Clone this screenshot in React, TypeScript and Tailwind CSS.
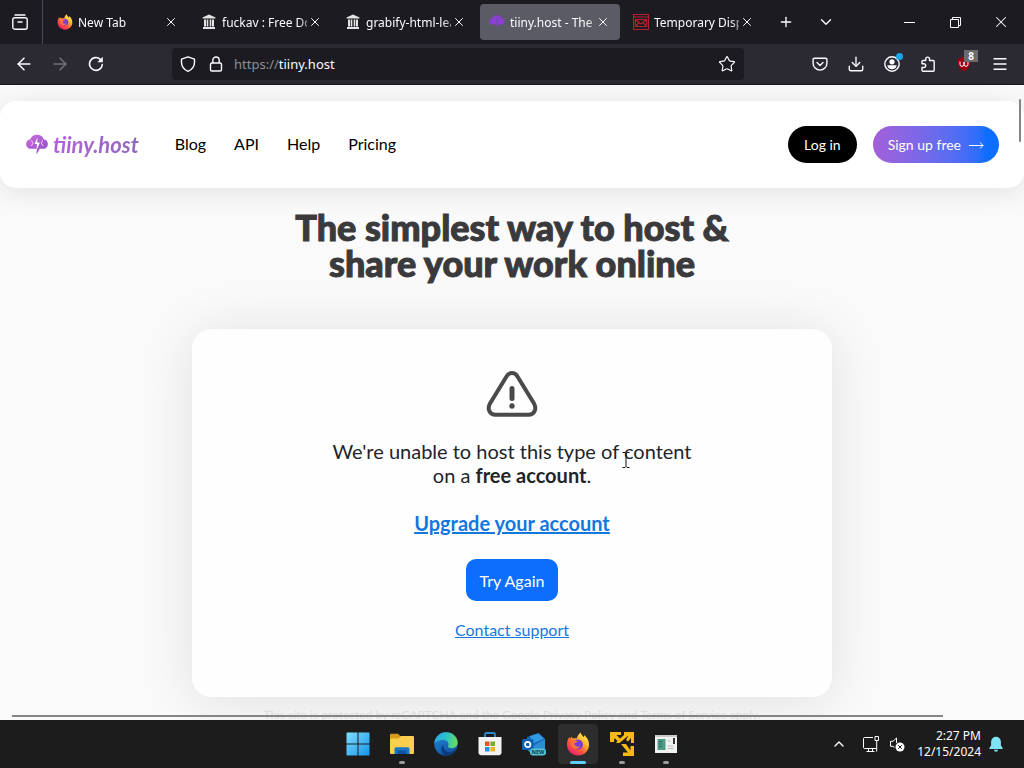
import type { ReactNode } from 'react'
import { ArrowLeft, ArrowRight, ChevronDown, ChevronUp, Download, Menu, Plus, Star, X } from 'lucide-react'

type Tab = { title: string; icon: ReactNode; active?: boolean }

function FirefoxIcon({ className }: { className: string }) {
  return (
    <svg viewBox="0 0 24 24" className={className} aria-hidden="true">
      <defs>
        <linearGradient id="ff-body" x1="0.85" y1="0.05" x2="0.2" y2="0.95">
          <stop offset="0" stopColor="#fff44f" />
          <stop offset="0.35" stopColor="#ffb52a" />
          <stop offset="0.65" stopColor="#ff5a3c" />
          <stop offset="1" stopColor="#e51b72" />
        </linearGradient>
      </defs>
      <path
        d="M1 12.5c0-3 .8-5.600 2.400-7.600L4.200 7l1.200-2.200L7 6.600c1.300-.4 2.600-.4 3.800 0 .4-2.400 1.800-4.700 4-6.100.2 2.200 1.500 3.200 3.200 4.800.2-.8.200-1.500 0-2.200 3.200 2.200 5 5.800 5 9.700C23 19 18.200 23.500 12 23.500S1 18.800 1 12.500z"
        fill="url(#ff-body)"
      />
      <circle cx="12" cy="12.500" r="5" fill="#7a3fd1" />
      <path d="M5.500 9c2-1.200 4.800-.8 6.500.8-1.600.2-2.400 1.200-3.800 1.400.4 2.800 3.400 4.200 6 3-1.600 3-6.200 3.600-8.400.8C4.300 13 4.400 10.800 5.500 9z" fill="#ff7139" />
    </svg>
  )
}

function ArchiveIcon() {
  return (
    <svg viewBox="0 0 16 16" className="size-4 shrink-0" fill="#e4e4e4" aria-hidden="true">
      <path d="M8 0.500l6.500 3v1h-13v-1zM3 5.500h2v7H3zM5.700 5.500h1.600v7H5.700zM8.700 5.500h1.600v7H8.700zM11 5.500h2v7h-2zM2 13h12v2H2z" />
    </svg>
  )
}

function CloudIcon({ className }: { className: string }) {
  return (
    <svg viewBox="0 0 24 22" className={className} aria-hidden="true">
      <defs>
        <linearGradient id="cloud" x1="0" y1="0" x2="1" y2="1">
          <stop offset="0" stopColor="#d06be0" />
          <stop offset="1" stopColor="#8a4fc4" />
        </linearGradient>
      </defs>
      <path d="M5 5.500C6 2.200 9 .8 12 .8s6 1.500 7 4.700c2.700.4 4.400 2.300 4.400 4.900S21.500 15.500 18.700 15.500H15l-3.500 6 .3-6H5.300C2.500 15.500.6 13.200.6 10.500S2.300 6 5 5.500z" fill="url(#cloud)" />
      <path d="M12.500 3.500L9.500 10.500h2.500l-.5 6.500 3.500-8h-2.800z" fill="#fff" />
      <path d="M6 6.500l2 3-2 3M18 6.500l-1.500 3 2 3" stroke="#efd0f5" fill="none" />
    </svg>
  )
}

const tabs: Tab[] = [
  { title: 'New Tab', icon: <FirefoxIcon className="size-4 shrink-0" /> },
  { title: 'fuckav : Free Do', icon: <ArchiveIcon /> },
  { title: 'grabify-html-lea', icon: <ArchiveIcon /> },
  {
    title: 'tiiny.host - The',
    active: true,
    icon: (
      <svg viewBox="0 0 16 16" className="size-4 shrink-0" fill="#8b3fd6" aria-hidden="true">
        <path d="M3.500 4C4.300 2 6 1.200 8 1.200S11.800 2 12.500 4c2 .3 3.200 1.600 3.200 3.400s-1.300 3.200-3.200 3.200H9.800L8 13.500v-2.900H3.500C1.500 10.600.3 9.200.3 7.400S1.600 4.300 3.500 4z" />
        <path d="M8.500 4L7 7h1.800L8 9.500" stroke="#6b4f9a" fill="none" />
      </svg>
    ),
  },
  {
    title: 'Temporary Disp',
    icon: (
      <svg viewBox="0 0 16 16" className="size-4 shrink-0" fill="none" stroke="#b3202e" aria-hidden="true">
        <path d="M.5.5h15v15H.5zM.5 3h15M2.500 5.500h11v7h-11zM2.500 5.500L8 10l5.500-4.500M2.500 12.500L6 8.500M13.500 12.500L10 8.500" strokeWidth="1.200" />
      </svg>
    ),
  },
]

function TabBar() {
  return (
    <div className="flex h-11 shrink-0 items-center bg-[#1c1b22]">
      <button aria-label="Firefox View" className="flex h-full w-[43px] items-center justify-center border-r border-[#4a4a52] pr-0.5">
        <svg viewBox="0 0 16 16" className="size-4" fill="none" stroke="currentColor" strokeWidth="1.400" aria-hidden="true">
          <path d="M3 1h10M6 8h4" strokeLinecap="round" />
          <rect x=".8" y="3.700" width="14.400" height="11.500" rx="2" />
        </svg>
      </button>
      <div className="flex gap-1 pl-[5px]" role="tablist">
        {tabs.map((tab) => (
          <div
            key={tab.title}
            className={`flex h-9 w-[140px] items-center rounded pl-[9px] pr-[9px] ${tab.active ? 'bg-[#5b5b66]' : ''}`}
          >
            {tab.icon}
            <button
              role="tab"
              aria-selected={!!tab.active}
              className="ml-[5px] min-w-0 flex-1 whitespace-nowrap mask-r-from-90% mask-r-to-110% pt-px text-left text-xs"
            >
              {tab.title}
            </button>
            <button aria-label={`Close ${tab.title}`} className="flex size-4 shrink-0 items-center justify-center">
              <X className="size-3.5" strokeWidth={1.7} />
            </button>
          </div>
        ))}
      </div>
      <button aria-label="New tab" className="ml-1 flex size-9 items-center justify-center">
        <Plus className="size-4" strokeWidth={2} />
      </button>
      <button aria-label="List all tabs" className="ml-1 flex size-9 items-center justify-center">
        <ChevronDown className="size-[18px]" strokeWidth={1.8} />
      </button>
      <div className="ml-auto flex h-full">
        <button aria-label="Minimize" className="flex w-[46px] items-center justify-center">
          <span className="h-px w-[11px] bg-white" />
        </button>
        <button aria-label="Restore" className="flex w-[46px] items-center justify-center">
          <svg viewBox="0 0 11 11" className="size-[11px]" fill="none" stroke="currentColor" aria-hidden="true">
            <path d="M.5 2.500h8v8h-8zM2.500 2.500v-2h8v8h-2" />
          </svg>
        </button>
        <button aria-label="Close window" className="flex w-[46px] items-center justify-center">
          <X className="size-[18px]" strokeWidth={1.4} />
        </button>
      </div>
    </div>
  )
}

function ToolButton({ label, children }: { label: string; children: ReactNode }) {
  return (
    <button aria-label={label} className="relative flex size-9 items-center justify-center">
      {children}
    </button>
  )
}

function Toolbar() {
  return (
    <div className="flex h-[41px] shrink-0 items-center border-b border-[#17161b] bg-[#2b2a33] px-1.5">
      <ToolButton label="Back">
        <ArrowLeft className="size-5" strokeWidth={1.8} />
      </ToolButton>
      <ToolButton label="Forward">
        <ArrowRight className="size-5 text-[#74737b]" strokeWidth={1.8} />
      </ToolButton>
      <ToolButton label="Reload">
        <svg viewBox="0 0 16 16" className="size-4" fill="none" stroke="currentColor" strokeWidth="1.600" aria-hidden="true">
          <path d="M14.300 8.500A6.400 6.400 0 1 1 12.300 3.300" strokeLinecap="round" />
          <path d="M14.800.8v5.400H9.400z" fill="currentColor" stroke="none" />
        </svg>
      </ToolButton>
      <div className="ml-[58px] flex h-8 min-w-0 flex-1 items-center rounded bg-[#1c1b22] px-2">
        <svg viewBox="0 0 16 16" className="size-4 shrink-0" fill="none" stroke="currentColor" strokeWidth="1.400" strokeLinejoin="round" aria-hidden="true">
          <path d="M8 .8l6.500 2.400v3.300c0 3.800-2.200 6.900-6.500 8.800C3.700 13.400 1.500 10.300 1.500 6.500V3.200z" />
        </svg>
        <svg viewBox="0 0 16 16" className="ml-3 size-4 shrink-0" fill="none" stroke="currentColor" strokeWidth="1.400" aria-hidden="true">
          <rect x="2.500" y="7" width="11" height="8" rx="1.500" />
          <path d="M4.800 7V4.200a3.200 3.200 0 0 1 6.400 0V7" />
        </svg>
        <button aria-label="Address" className="ml-[10px] flex-1 pt-0.5 text-left text-[13px]">
          <span className="text-[#8f8e96]">https://</span>tiiny.host
        </button>
        <Star className="size-[18px] shrink-0" strokeWidth={1.6} />
      </div>
      <div className="ml-[58px] flex">
        <ToolButton label="Save to Pocket">
          <svg viewBox="0 0 16 16" className="size-4" fill="none" stroke="currentColor" strokeWidth="1.400" strokeLinecap="round" strokeLinejoin="round" aria-hidden="true">
            <path d="M2.300 2.200h11.400c.7 0 1.200.5 1.200 1.200v3.800a6.900 6.900 0 0 1-13.800 0V3.400c0-.7.5-1.200 1.200-1.200z" />
            <path d="M5 6.600l3 2.800 3-2.800" />
          </svg>
        </ToolButton>
        <ToolButton label="Downloads">
          <Download className="size-[18px]" strokeWidth={1.8} />
        </ToolButton>
        <ToolButton label="Account">
          <svg viewBox="0 0 16 16" className="size-4" aria-hidden="true">
            <circle cx="8" cy="8" r="7.200" fill="none" stroke="currentColor" strokeWidth="1.400" />
            <circle cx="8" cy="5.800" r="2.600" fill="currentColor" />
            <path d="M3.300 9.200h9.400c-.3 2.500-2.300 4-4.700 4s-4.400-1.500-4.700-4z" fill="currentColor" />
          </svg>
          <span className="absolute right-[7px] top-[7px] size-[7px] rounded-full bg-[#1aa5e8]" />
        </ToolButton>
        <ToolButton label="Extensions">
          <svg viewBox="0 0 16 16" className="size-4" fill="none" stroke="currentColor" strokeWidth="1.400" strokeLinejoin="round" aria-hidden="true">
            <path d="M5.700 4.500V3a1.900 1.900 0 0 1 3.800 0v1.500h3.700c.6 0 1 .4 1 1v8.700c0 .5-.4 1-1 1H3c-.6 0-1-.5-1-1v-2.700h1.800a1.900 1.900 0 0 0 0-3.800H2V5.500c0-.6.4-1 1-1z" />
          </svg>
        </ToolButton>
        <ToolButton label="uBlock Origin">
          <svg viewBox="0 0 16 16" className="size-4" aria-hidden="true">
            <path d="M8 .5l6 2.300v4.700c0 3.600-2.500 6-6 8-3.500-2-6-4.400-6-8V2.800z" fill="#9c0012" />
            <path d="M4 5.500v2.800a1.500 1.500 0 0 0 4 0V6v2.300a1.500 1.500 0 0 0 4 0V6" fill="none" stroke="#fff" />
          </svg>
          <span className="absolute right-1 top-1 bg-[#6b6b6b] px-1 text-[10px] font-bold leading-3">8</span>
        </ToolButton>
        <ToolButton label="Menu">
          <Menu className="size-[18px]" strokeWidth={1.7} />
        </ToolButton>
      </div>
    </div>
  )
}

function SiteHeader() {
  return (
    <header className="flex items-center rounded-2xl bg-white p-[25px] shadow-[0_4px_28px_rgba(0,0,0,0.1)]">
      <a href="#" className="flex items-center gap-1">
        <CloudIcon className="h-[21px] w-6" />
        <span className="bg-linear-to-r from-[#b063d6] to-[#9068c0] bg-clip-text pr-1 text-[22px] font-bold italic leading-7 text-transparent">
          tiiny.host
        </span>
      </a>
      <nav className="ml-8 flex gap-7 pb-0.5 text-base text-black">
        <a href="#">Blog</a>
        <a href="#">API</a>
        <a href="#">Help</a>
        <a href="#">Pricing</a>
      </nav>
      <div className="ml-auto flex gap-4 text-sm text-white">
        <button className="h-[37px] rounded-full bg-black px-4">Log in</button>
        <button className="flex h-[37px] items-center gap-2 rounded-full bg-linear-to-r from-[#a35fd9] to-[#0d6efd] to-90% px-[15px]">
          Sign up free
          <svg viewBox="0 0 15 10" className="h-[10px] w-[15px]" fill="none" stroke="currentColor" aria-hidden="true">
            <path d="M0 5.500h14M11 2.500l3 3-3 3" />
          </svg>
        </button>
      </div>
    </header>
  )
}

function UploadCard() {
  return (
    <section className="mx-auto mt-12 flex w-[640px] max-w-full shrink-0 flex-col items-center rounded-[20px] bg-[#fefefe] pb-[55px] pt-[41px] text-center shadow-[0_4px_56px_rgba(0,0,0,0.11)]">
      <svg viewBox="0 0 52 48" className="h-12 w-[52px]" fill="none" stroke="#4a4a4c" strokeLinecap="round" strokeLinejoin="round" aria-hidden="true">
        <path d="M20.500 6.500C23 1.800 29 1.800 31.500 6.500L48 33.500C51 38.800 48.500 44.800 42.500 44.800H9.500C3.500 44.800 1 38.800 4 33.500z" strokeWidth="4" />
        <path d="M26 18.500v10" strokeWidth="5" />
        <path d="M26 36v.1" strokeWidth="5.400" />
      </svg>
      <p className="mt-[21px] w-[380px] text-xl leading-6">
        We're unable to host this type of content on a <strong className="font-bold">free account</strong>.
      </p>
      <a href="#" className="mt-6 text-xl font-bold leading-6 text-[#1477dd] underline">
        Upgrade your account
      </a>
      <button className="mt-6 h-[42px] rounded-[10px] bg-[#0d6efd] px-[14px] pt-0.5 text-base text-white">Try Again</button>
      <a href="#" className="mt-[17px] text-base text-[#1477dd] underline">
        Contact support
      </a>
    </section>
  )
}

const apps: { label: string; state?: 'open' | 'active'; icon: ReactNode }[] = [
  {
    label: 'Start',
    icon: (
      <svg viewBox="0 0 24 24" className="size-6" aria-hidden="true">
        <defs>
          <linearGradient id="win" x1="0" y1="0" x2="1" y2="1">
            <stop offset="0" stopColor="#7fe0ff" />
            <stop offset="1" stopColor="#1593e8" />
          </linearGradient>
        </defs>
        <path d="M1 .5h10.500V11.500H.5V1zM12.500.5H23l.5.5v10.500h-11zM.5 12.500h11v11H1L.5 23zM12.500 12.500h11V23l-.5.5H12.500z" fill="url(#win)" />
      </svg>
    ),
  },
  {
    label: 'File Explorer',
    state: 'open',
    icon: (
      <svg viewBox="0 0 24 24" className="size-6" aria-hidden="true">
        <path d="M0 3c0-.8.500-1.300 1.300-1.300H8l2.500 2.500H22V8H0z" fill="#d99a1c" />
        <path d="M0 6.500h8.500L11 4h11.700c.8 0 1.300.5 1.300 1.300v15.400c0 .8-.5 1.300-1.300 1.300H1.300C.5 22 0 21.500 0 20.700z" fill="#fbcf4e" />
        <path d="M4.500 22v-5c0-1 .7-1.700 1.700-1.700h11.600c1 0 1.700.7 1.700 1.700v5z" fill="#1976c9" />
        <path d="M7.500 18.500h9V22h-9z" fill="#0f559e" />
      </svg>
    ),
  },
  {
    label: 'Edge',
    icon: (
      <svg viewBox="0 0 24 24" className="size-6" aria-hidden="true">
        <defs>
          <linearGradient id="edge-top" x1="0" y1="0.300" x2="1" y2="0.500">
            <stop offset="0" stopColor="#2aa7e8" />
            <stop offset="0.500" stopColor="#2cc3c8" />
            <stop offset="1" stopColor="#69dc58" />
          </linearGradient>
          <linearGradient id="edge-bottom" x1="0" y1="0" x2="0.600" y2="1">
            <stop offset="0" stopColor="#2290d8" />
            <stop offset="1" stopColor="#124fa4" />
          </linearGradient>
        </defs>
        <circle cx="12" cy="12" r="11.700" fill="url(#edge-bottom)" />
        <path d="M.3 11.500C1 5 5.800.3 12 .3c7 0 11.700 5 11.700 10 0 3.800-2.700 6-6 6-2.500 0-4-1-3.500-2.300.7-1.800.6-5.300-3.700-5.800C6 7.700 1.500 9 .3 11.500z" fill="url(#edge-top)" />
        <path d="M9.500 12.500c-1 4.500 2.500 8.300 7 7.500 2-.3 4-1.300 5.500-2.500-1.500 3.500-5 6.200-9.500 6.200-4.500-.5-7-8-3-11.200z" fill="#0c3b7c" />
      </svg>
    ),
  },
  {
    label: 'Microsoft Store',
    icon: (
      <svg viewBox="0 0 24 24" className="size-6" aria-hidden="true">
        <path d="M7 6V2.500C7 1.500 7.700 1 8.500 1h7c.8 0 1.500.5 1.500 1.500V6" fill="none" stroke="#2a8ad0" strokeWidth="1.800" />
        <path d="M.5 5h23v15.500c0 1.500-1.200 2.700-2.700 2.700H3.200C1.700 23.200.5 22 .5 20.500z" fill="#f3f3f3" />
        <path d="M7 9.500h4.500V14H7z" fill="#e5532d" />
        <path d="M12.500 9.500H17V14h-4.500z" fill="#74ae30" />
        <path d="M7 15h4.500v4.500H7z" fill="#2493d8" />
        <path d="M12.500 15H17v4.500h-4.500z" fill="#f3b321" />
      </svg>
    ),
  },
  {
    label: 'Outlook (new)',
    icon: (
      <svg viewBox="0 0 24 24" className="size-6" aria-hidden="true">
        <path d="M5 5l12-4 6 6v11H5z" fill="#1767b8" />
        <path d="M8 4l8-2.500 6 5L10 12z" fill="#2f9be0" />
        <path d="M6 17l17-10v11c0 1-1 2-2 2H8c-1 0-2-1-2-3z" fill="#2a8fd0" />
        <rect x="0" y="7" width="11.500" height="11" rx="1.500" fill="#0d62b4" />
        <circle cx="5.700" cy="12.500" r="2.700" fill="none" stroke="#fff" strokeWidth="1.700" />
        <rect x="8" y="16.500" width="16" height="7" rx="3" fill="#58c4cf" />
        <text x="16" y="22" textAnchor="middle" fontSize="5.500" fontWeight="700" fill="#073d56">NEW</text>
      </svg>
    ),
  },
  { label: 'Firefox', state: 'active', icon: <FirefoxIcon className="size-6" /> },
  {
    label: 'Process tool',
    state: 'open',
    icon: (
      <svg viewBox="0 0 24 24" className="size-6" fill="#f7b916" aria-hidden="true">
        <path d="M0 0h11v3H6.500L10 6.500 14 3V0h10v11h-3V6l-3 3.500-2-1.500 2.500-4.500L9.500 11H6l1.500-2-3-3-.5 4H0z" />
        <path d="M11 12h5l4.500 6.500V14H24v10H13v-3.500h5z" />
      </svg>
    ),
  },
  {
    label: 'Form viewer',
    state: 'open',
    icon: (
      <svg viewBox="0 0 24 24" className="size-6" aria-hidden="true">
        <path d="M1 3h22v18H1z" fill="#f1f3f2" />
        <path d="M1 3h22v2H1z" fill="#c8cbca" />
        <path d="M3.500 7h8v11h-8z" fill="#4f9a86" />
        <path d="M5 9.500h3M5 12h3M5 14.500h3" stroke="#2d6758" />
        <path d="M13.500 14h6M13.500 16.500h6M13.500 9h3" stroke="#b4bab8" />
        <path d="M20 6v6" stroke="#222" strokeWidth="1.800" />
      </svg>
    ),
  },
]

function Taskbar() {
  return (
    <footer className="grid h-12 shrink-0 grid-cols-[1fr_auto_1fr] items-center bg-[#1c1c1c] text-white">
      <div />
      <div className="flex gap-1">
        {apps.map((app) => (
          <button
            key={app.label}
            aria-label={app.label}
            className={`relative flex size-10 items-center justify-center rounded ${app.state === 'active' ? 'bg-[#2d2d2d]' : ''}`}
          >
            {app.icon}
            {app.state === 'open' && <span className="absolute bottom-0 h-[3px] w-1.5 rounded-full bg-[#9a9a9a]" />}
            {app.state === 'active' && <span className="absolute bottom-0 h-[3px] w-4 rounded-full bg-[#60cdff]" />}
          </button>
        ))}
      </div>
      <div className="flex items-center justify-end pr-5">
        <button aria-label="Show hidden icons">
          <ChevronUp className="size-4" strokeWidth={2} />
        </button>
        <svg viewBox="0 0 16 16" className="ml-4 size-4" fill="none" stroke="currentColor" aria-hidden="true">
          <path d="M10 1.500H1.500c-.6 0-1 .4-1 1v9c0 .5.4 1 1 1h12M3.500 15.500h8M5.500 12.500v3M9.500 12.500v3" />
          <path d="M12 .5h3.500v4H12zM13.700 4.500v11" />
        </svg>
        <svg viewBox="0 0 16 16" className="ml-[10px] size-4" fill="none" stroke="currentColor" aria-hidden="true">
          <path d="M7.500 7V2L4 5.300H1.500v5H4l1.500 1.300" />
          <circle cx="11" cy="11" r="4.500" fill="#fff" stroke="none" />
          <path d="M9.200 9.200l3.600 3.600M12.800 9.200l-3.600 3.600" stroke="#1c1c1c" />
        </svg>
        <div className="ml-3 text-right text-xs leading-4">
          <div>2:27 PM</div>
          <div>12/15/2024</div>
        </div>
        <svg viewBox="0 0 16 16" className="ml-[7px] size-4" fill="#7fe3f5" aria-hidden="true">
          <path d="M8 .8A4.900 4.900 0 0 0 3.100 5.700v3.500L1.300 12.200c-.2.400 0 .8.500.8h12.400c.5 0 .7-.4.500-.8l-1.800-3V5.700A4.900 4.900 0 0 0 8 .8zM6 13.800a2 2 0 0 0 4 0z" />
        </svg>
      </div>
    </footer>
  )
}

export default function App() {
  return (
    <div className="flex h-screen flex-col overflow-hidden font-['Noto_Sans',sans-serif] text-[#fbfbfe]">
      <TabBar />
      <Toolbar />
      <main className="relative flex min-h-0 flex-1 flex-col overflow-hidden bg-[#fafafa] pt-4 font-['Lato',sans-serif] text-[#212529]">
        <SiteHeader />
        <h1 className="mx-auto mt-[21px] w-[480px] max-w-full text-center text-[36px] font-black leading-9 text-[#3a3a3d] [-webkit-text-stroke:1px_#3a3a3d]">
          The simplest way to host & share your work online
        </h1>
        <UploadCard />
        <p className="mt-[10px] shrink-0 text-center text-xs leading-4 text-[#dedede]">
          This site is protected by reCAPTCHA and the Google Privacy Policy and Terms of Service apply.
        </p>

        {/* overlay scrollbars */}
        <div className="absolute right-[3px] top-[14px] h-[43px] w-0.5 rounded-full bg-[#858585]" />
        <div className="absolute bottom-[3px] left-3 right-[81px] h-0.5 bg-[#858585]" />

        {/* text cursor */}
        <svg viewBox="0 0 8 16" className="absolute left-[calc(50%+110px)] top-[367px] h-4 w-2" fill="none" stroke="#111" aria-hidden="true">
          <path d="M.5.5H3l1 1 1-1h2.500M4 1.500v13M.5 15.500H3l1-1 1 1h2.500" />
        </svg>
      </main>
      <Taskbar />
    </div>
  )
}
